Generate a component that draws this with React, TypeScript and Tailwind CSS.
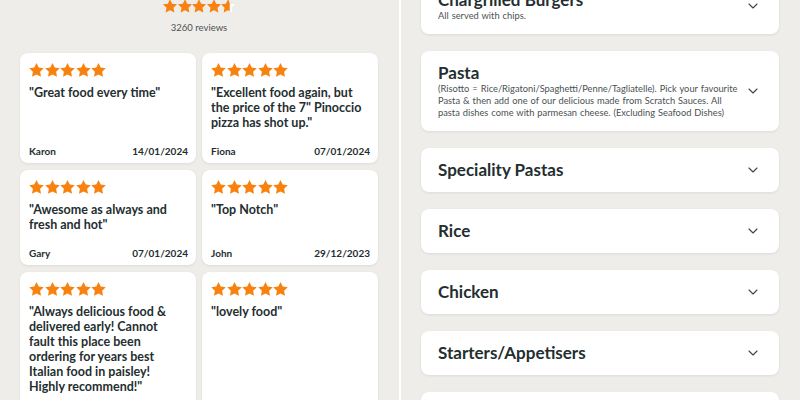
import { ChevronDown } from 'lucide-react';

interface Review {
  name: string;
  date: string;
  text: string;
}

const reviews: Review[] = [
  { name: 'Karon', date: '14/01/2024', text: '"Great food every time"' },
  { name: 'Fiona', date: '07/01/2024', text: '"Excellent food again, but the price of the 7" Pinoccio pizza has shot up."' },
  { name: 'Gary', date: '07/01/2024', text: '"Awesome as always and fresh and hot"' },
  { name: 'John', date: '29/12/2023', text: '"Top Notch"' },
  { name: 'Rachel', date: '28/12/2023', text: '"Always delicious food & delivered early! Cannot fault this place been ordering for years best Italian food in paisley! Highly recommend!"' },
  { name: 'Steven', date: '27/12/2023', text: '"lovely food"' },
];

const categories = ['Speciality Pastas', 'Rice', 'Chicken', 'Starters/Appetisers', 'Pizzas'];

const STAR = 'M12 2l3.09 6.26L22 9.27l-5 4.87 1.18 6.88L12 17.77l-6.18 3.25L7 14.14 2 9.27l6.91-1.01L12 2z';

function Star({ className, half }: { className: string; half?: boolean }) {
  if (half) {
    return (
      <svg viewBox="2 2 20 19.3" className={className}>
        <defs>
          <clipPath id="half-star">
            <rect x="2" y="0" width="12.5" height="24" />
          </clipPath>
        </defs>
        <path d={STAR} fill="#ffffff" />
        <path d={STAR} fill="#f7820f" clipPath="url(#half-star)" />
      </svg>
    );
  }
  return (
    <svg viewBox="2 2 20 19.3" className={className}>
      <path d={STAR} fill="#f7820f" />
    </svg>
  );
}

function ReviewCard({ review }: { review: Review }) {
  return (
    <div className="flex flex-col rounded-lg bg-white pl-[9px] pr-[8px] pt-[10px] pb-[5px] shadow-[0_1px_3px_rgba(0,0,0,0.08)]">
      <div className="flex gap-[0.5px]">
        {[0, 1, 2, 3, 4].map((i) => (
          <Star key={i} className="h-[14px] w-[15px]" />
        ))}
      </div>
      <p className="mt-[8px] flex-1 pr-[4px] text-[12.5px] font-bold leading-[15px] text-[#242e30]">
        {review.text}
      </p>
      <div className="mt-[14px] flex items-center justify-between text-[10px] font-bold leading-[14px] text-[#242e30]">
        <span>{review.name}</span>
        <span>{review.date}</span>
      </div>
    </div>
  );
}

function CategoryCard({ title, description }: { title: string; description?: string }) {
  return (
    <div className="flex items-center rounded-lg bg-white py-3 pl-[17px] pr-[18px] shadow-[0_1px_3px_rgba(0,0,0,0.08)]">
      <div className="flex-1 pr-[4px]">
        <h3 className="text-[17px] font-bold leading-[20px] text-[#242e30]">{title}</h3>
        {description && (
          <p className="max-w-[301px] text-[9.3px] leading-[12px] [word-spacing:0.6px] text-[#4a5153]">{description}</p>
        )}
      </div>
      <ChevronDown className="h-4 w-4 text-[#3c4547]" strokeWidth={1.6} />
    </div>
  );
}

export default function App() {
  return (
    <div className="flex h-[400px] w-[800px] overflow-hidden bg-[#eeede9] font-['Lato',sans-serif]">
      {/* Reviews */}
      <div className="w-[399px] shrink-0 pl-5 pr-[21px]">
        <div className="-mt-[1px] flex h-[14px] justify-center gap-[0.5px]">
          {[0, 1, 2, 3].map((i) => (
            <Star key={i} className="h-[14px] w-[14px]" />
          ))}
          <Star half className="h-[14px] w-[14px]" />
        </div>
        <p className="mt-[8px] text-center text-[9.5px] leading-[13px] text-[#4a5153]">3260 reviews</p>
        <div className="mt-[19px] grid grid-cols-2 gap-x-[6px] gap-y-[7px]">
          {reviews.map((r) => (
            <ReviewCard key={r.name} review={r} />
          ))}
        </div>
      </div>

      <div className="w-[2px] shrink-0 bg-white" />

      {/* Menu categories */}
      <div className="flex flex-1 flex-col gap-[17px] pl-5 pr-[21px]">
        <div className="-mt-[22px]">
          <CategoryCard title="Chargrilled Burgers" description="All served with chips." />
        </div>
        <CategoryCard
          title="Pasta"
          description="(Risotto = Rice/Rigatoni/Spaghetti/Penne/Tagliatelle). Pick your favourite Pasta & then add one of our delicious made from Scratch Sauces. All pasta dishes come with parmesan cheese. (Excluding Seafood Dishes)"
        />
        {categories.map((c) => (
          <CategoryCard key={c} title={c} />
        ))}
      </div>
    </div>
  );
}
